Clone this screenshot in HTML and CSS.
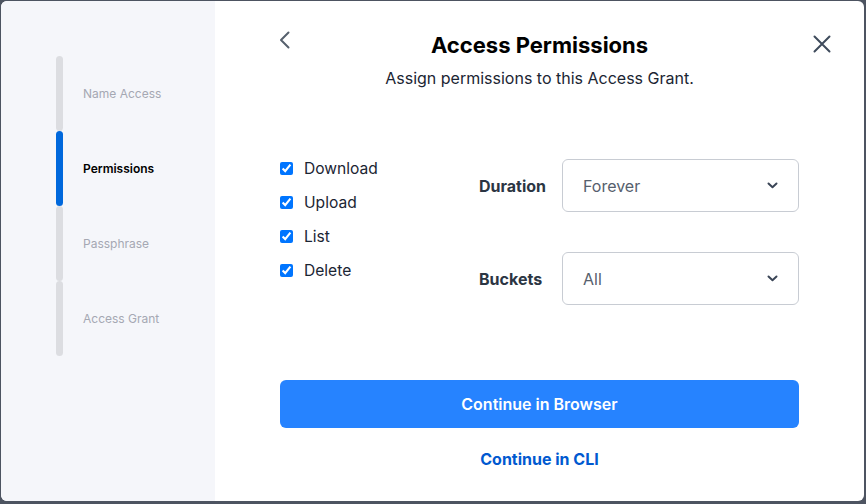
FILE: index.html
```html
<!DOCTYPE html>
<html lang="en">
<head>
<meta charset="utf-8">
<title>Access Permissions</title>
<link rel="stylesheet" href="styles.css">
</head>
<body>
<div class="modal">
  <aside class="sidebar">
    <ol class="steps">
      <li class="step"><span class="bar"></span><span class="step-label">Name Access</span></li>
      <li class="step active"><span class="bar"></span><span class="step-label">Permissions</span></li>
      <li class="step"><span class="bar"></span><span class="step-label">Passphrase</span></li>
      <li class="step"><span class="bar"></span><span class="step-label">Access Grant</span></li>
    </ol>
  </aside>
  <main class="main">
    <button class="icon-btn back" aria-label="Back">
      <svg width="12" height="18" viewBox="0 0 12 18"><polyline points="9.5,1.5 2,9 9.5,16.5" fill="none" stroke="#56606d" stroke-width="2" stroke-linecap="round" stroke-linejoin="round"/></svg>
    </button>
    <button class="icon-btn close" aria-label="Close">
      <svg width="18" height="18" viewBox="0 0 18 18"><path d="M1.5 1.5 L16.5 16.5 M16.5 1.5 L1.5 16.5" fill="none" stroke="#3f4b5c" stroke-width="2" stroke-linecap="round"/></svg>
    </button>
    <h1 class="title">Access Permissions</h1>
    <p class="subtitle">Assign permissions to this Access Grant.</p>
    <div class="form">
      <div class="perms">
        <label class="perm"><input type="checkbox" checked><span>Download</span></label>
        <label class="perm"><input type="checkbox" checked><span>Upload</span></label>
        <label class="perm"><input type="checkbox" checked><span>List</span></label>
        <label class="perm"><input type="checkbox" checked><span>Delete</span></label>
      </div>
      <div class="fields">
        <div class="field">
          <span class="field-label">Duration</span>
          <div class="select"><span>Forever</span>
            <svg width="11" height="7" viewBox="0 0 11 7"><polyline points="1.5,1.5 5.5,5.2 9.5,1.5" fill="none" stroke="#3a4556" stroke-width="2" stroke-linecap="round" stroke-linejoin="round"/></svg>
          </div>
        </div>
        <div class="field">
          <span class="field-label">Buckets</span>
          <div class="select"><span>All</span>
            <svg width="11" height="7" viewBox="0 0 11 7"><polyline points="1.5,1.5 5.5,5.2 9.5,1.5" fill="none" stroke="#3a4556" stroke-width="2" stroke-linecap="round" stroke-linejoin="round"/></svg>
          </div>
        </div>
      </div>
    </div>
    <button class="primary">Continue in Browser</button>
    <a class="link" href="#">Continue in CLI</a>
  </main>
</div>
</body>
</html>
```
FILE: styles.css
```css
* { box-sizing: border-box; }
html, body { margin: 0; padding: 0; }
body {
  background: #4d5461;
  font-family: Inter, "Noto Sans", sans-serif;
  width: 866px;
  height: 504px;
  overflow: hidden;
}
.modal {
  margin: 1px 0 0 1px;
  width: 863px;
  height: 500px;
  background: #fff;
  border-radius: 6px;
  overflow: hidden;
  display: flex;
}
.sidebar {
  width: 214px;
  flex: none;
  background: #f5f6fa;
  padding: 55px 0 0 55px;
}
.steps { list-style: none; margin: 0; padding: 0; }
.step {
  display: flex;
  align-items: center;
  height: 75px;
}
.bar {
  width: 7px;
  height: 75px;
  background: #dcdde1;
  border-radius: 4px;
  flex: none;
}
.step-label {
  padding-left: 20px;
  font-size: 12px;
  color: #a5a8b3;
}
.step.active .bar { background: #0068dc; }
.step.active .step-label { color: #000; font-weight: 600; }

.main {
  position: relative;
  flex: 1;
  padding: 32px 65px 0 65px;
}
.icon-btn {
  position: absolute;
  background: none;
  border: 0;
  padding: 0;
  display: flex;
}
.back { left: 64px; top: 30px; }
.close { left: 598px; top: 34px; }
.title {
  margin: 0;
  text-align: center;
  font-size: 22px;
  line-height: 24px;
  font-weight: 700;
  color: #000;
}
.subtitle {
  margin: 12px 0 0;
  text-align: center;
  font-size: 16px;
  line-height: 18px;
  color: #1b2533;
}
.form {
  margin-top: 64px;
  display: flex;
  align-items: flex-start;
}
.perms {
  width: 199px;
  flex: none;
  display: flex;
  flex-direction: column;
}
.perm {
  display: flex;
  align-items: center;
  height: 34px;
  font-size: 15.6px;
  color: #1b2533;
}
.perm input {
  margin: 0 11px 0 0;
  width: 13px;
  height: 13px;
  accent-color: #0075ff;
}
.fields {
  flex: 1;
  margin-top: 8px;
  display: flex;
  flex-direction: column;
  gap: 40px;
}
.field {
  display: flex;
  align-items: center;
}
.field-label {
  width: 83px;
  flex: none;
  font-size: 16px;
  font-weight: 700;
  color: #2b3543;
}
.select {
  flex: 1;
  height: 53px;
  border: 1px solid #c8ccd3;
  border-radius: 6px;
  display: flex;
  align-items: center;
  justify-content: space-between;
  padding: 0 20px 0 20px;
  font-size: 16px;
  color: #56606d;
}
.primary {
  display: block;
  width: 100%;
  margin-top: 75px;
  height: 48px;
  border: 0;
  border-radius: 6px;
  background: #2683ff;
  color: #fff;
  font-family: inherit;
  font-size: 16px;
  font-weight: 600;
}
.link {
  display: block;
  margin-top: 21px;
  text-align: center;
  font-size: 16px;
  line-height: 20px;
  font-weight: 700;
  color: #0059d0;
  text-decoration: none;
}
```
